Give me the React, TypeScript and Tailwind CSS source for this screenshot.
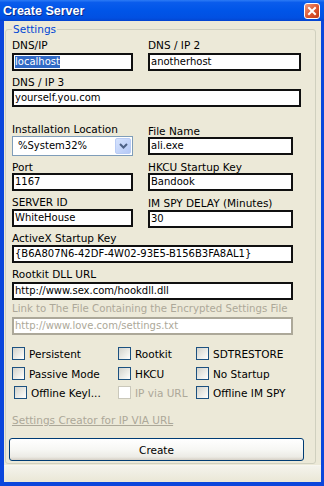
import React from "react";

function Label({ children, gray }: { children: React.ReactNode; gray?: boolean }) {
  return (
    <div className={gray ? "h-[12px] leading-[12px] text-[10.2px] text-[#ACA899] whitespace-nowrap" : "h-[12px] leading-[12px] text-[10.5px] text-black whitespace-nowrap"}>
      {children}
    </div>
  );
}

function Box({ className, children, gray }: { className: string; children?: React.ReactNode; gray?: boolean }) {
  return (
    <div
      className={
        (gray
          ? "border-2 border-[#ACA899] text-[#ACA899] "
          : "border-2 border-[#101010] text-black ") +
        "box-border h-[18px] bg-white pl-[1px] text-[10px] leading-[14px] whitespace-nowrap overflow-hidden " +
        className
      }
    >
      {children}
    </div>
  );
}

function Check({ label, disabled, shift }: { label: string; disabled?: boolean; shift?: boolean }) {
  return (
    <div className={shift ? "flex items-center h-[13px] ml-[2px]" : "flex items-center h-[13px]"}>
      <span
        className={
          disabled
            ? "w-[13px] h-[13px] box-border border border-[#CAC8BB] bg-white shrink-0"
            : "w-[13px] h-[13px] box-border border border-[#1C5180] bg-[linear-gradient(135deg,#D2D2CB,#F2F2EE_70%,#FFFFFF)] shrink-0"
        }
      />
      <span className={disabled ? "ml-[4px] text-[10.5px] leading-[12px] text-[#ACA899] whitespace-nowrap" : "ml-[4px] text-[10.5px] leading-[12px] text-black whitespace-nowrap"}>
        {label}
      </span>
    </div>
  );
}

export default function App() {
  return (
    <div className="w-[324px] h-[486px] flex flex-col bg-[#0B46DC] font-['DejaVu_Sans',sans-serif] overflow-hidden">
      {/* Title bar */}
      <div className="h-[21px] shrink-0 relative flex items-center bg-[linear-gradient(to_bottom,#2C7BF5_0%,#0A5CEC_12%,#0055E8_50%,#0150E2_85%,#0444CF_100%)]">
        <span className="ml-[3px] mt-[1px] text-white font-bold text-[12.5px] leading-[16px] font-['Liberation_Sans',sans-serif] [text-shadow:1px_1px_0_#0A2A8A]">
          Create Server
        </span>
        <div className="absolute left-[304px] top-[3px] w-[16px] h-[16px] box-border border border-white rounded-[3px] bg-[linear-gradient(135deg,#F19A7E,#DC5530_55%,#C23A16)] flex items-center justify-center">
          <svg width="10" height="10" viewBox="0 0 10 10">
            <path d="M2 2 L8 8 M8 2 L2 8" stroke="white" strokeWidth="2" strokeLinecap="square" />
          </svg>
        </div>
      </div>

      {/* Client area */}
      <div className="flex-1 ml-[4px] mr-[3px] mb-[4px] bg-[#ECE9D8] flex flex-col">
        {/* Group box */}
        <div className="relative mt-[8px] ml-[1px] w-[311px] h-[435px] box-border border border-[#D0D0BF] rounded-[3px]">
          <span className="absolute left-[6px] top-[-7px] px-[1px] bg-[#ECE9D8] text-[10.5px] leading-[12px] text-[#0046D5]">
            Settings
          </span>
          <div className="pl-[6px] pt-[9px] flex flex-col">
            {/* Row 1 */}
            <div className="flex">
              <div className="w-[136px] flex flex-col">
                <Label>DNS/IP</Label>
                <Box className="mt-[2px] w-[121px]">
                  <span className="bg-[#316AC5] text-white inline-block leading-[12px] mt-[1px]">localhost</span>
                </Box>
              </div>
              <div className="flex flex-col">
                <Label>DNS / IP 2</Label>
                <Box className="mt-[2px] w-[153px]">anotherhost</Box>
              </div>
            </div>
            {/* Row 2 */}
            <div className="mt-[5px] flex flex-col">
              <Label>DNS / IP 3</Label>
              <Box className="mt-[1px] w-[289px]">yourself.you.com</Box>
            </div>
            {/* Row 3 */}
            <div className="mt-[16px] flex">
              <div className="w-[136px] flex flex-col">
                <Label>Installation Location</Label>
                <div className="mt-[1px] w-[121px] h-[20px] box-border border border-[#7F9DB9] bg-white flex items-center p-[1px]">
                  <span className="flex-1 pl-[4px] text-[10px] leading-[12px] text-black">%System32%</span>
                  <span className="w-[16px] h-[16px] box-border border border-[#B9CCF5] rounded-[2px] bg-[linear-gradient(135deg,#D6E3FD,#B4C8F6)] flex items-center justify-center">
                    <svg width="9" height="6" viewBox="0 0 9 6">
                      <path d="M1 1 L4.5 4.5 L8 1" stroke="#4D6185" strokeWidth="2" fill="none" />
                    </svg>
                  </span>
                </div>
              </div>
              <div className="flex flex-col pt-[2px]">
                <Label>File Name</Label>
                <Box className="mt-[0px] w-[145px]">ali.exe</Box>
              </div>
            </div>
            {/* Row 4 */}
            <div className="mt-[5px] flex">
              <div className="w-[136px] flex flex-col">
                <Label>Port</Label>
                <Box className="w-[121px]">1167</Box>
              </div>
              <div className="flex flex-col">
                <Label>HKCU Startup Key</Label>
                <Box className="w-[145px]">Bandook</Box>
              </div>
            </div>
            {/* Row 5 */}
            <div className="mt-[5px] flex">
              <div className="w-[136px] flex flex-col">
                <Label>SERVER ID</Label>
                <Box className="mt-[1px] w-[121px]">WhiteHouse</Box>
              </div>
              <div className="flex flex-col pt-[1px]">
                <Label>IM SPY DELAY (Minutes)</Label>
                <Box className="mt-[1px] w-[145px]">30</Box>
              </div>
            </div>
            {/* Row 6 */}
            <div className="mt-[4px] flex flex-col">
              <Label>ActiveX Startup Key</Label>
              <Box className="mt-[1px] w-[281px]">{"{B6A807N6-42DF-4W02-93E5-B156B3FA8AL1}"}</Box>
            </div>
            {/* Row 7 */}
            <div className="mt-[5px] flex flex-col">
              <Label>Rootkit DLL URL</Label>
              <Box className="mt-[2px] w-[281px]">http://www.sex.com/hookdll.dll</Box>
            </div>
            {/* Row 8 */}
            <div className="mt-[3px] flex flex-col">
              <Label gray>Link to The File Containing the Encrypted Settings File</Label>
              <Box gray className="mt-[2px] w-[281px]">http://www.love.com/settings.txt</Box>
            </div>
            {/* Checkboxes */}
            <div className="mt-[12px] grid grid-cols-[106px_78px_1fr] gap-y-[7px]">
              <Check label="Persistent" />
              <Check label="Rootkit" />
              <Check label="SDTRESTORE" />
              <Check label="Passive Mode" />
              <Check label="HKCU" />
              <Check label="No Startup" />
            </div>
            <div className="mt-[6px] grid grid-cols-[106px_78px_1fr]">
              <Check label="Offline Keyl..." shift />
              <Check label="IP via URL" disabled />
              <Check label="Offline IM SPY" />
            </div>
            {/* Link */}
            <div className="mt-[15px] h-[12px] leading-[12px] text-[10.5px] text-[#ACA899] underline">
              Settings Creator for IP VIA URL
            </div>
            {/* Button */}
            <button className="mt-[12px] ml-[-3px] w-[295px] h-[23px] box-border border border-[#003C74] rounded-[3px] bg-[linear-gradient(to_bottom,#FFFFFF_0%,#F7F7F4_50%,#ECEBE5_85%,#D6D0C5_100%)] text-[10.5px] leading-[12px] text-black flex items-center justify-center">
              Create
            </button>
          </div>
        </div>
        {/* Status strip */}
        <div className="mt-[1px] flex-1 border-t border-[#F7F6EF] bg-[linear-gradient(to_bottom,#F4F3EC,#EAE7D6)]" />
      </div>
    </div>
  );
}
